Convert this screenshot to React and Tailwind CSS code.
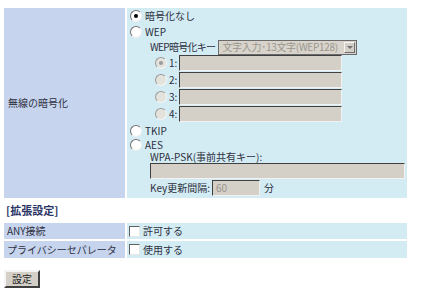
import React from 'react'

// ─── Classic form controls ───────────────────────────────────────────────────

function Radio({ checked = false, disabled = false }) {
  return (
    <span
      className={
        disabled
          ? 'inline-flex items-center justify-center w-[12px] h-[12px] rounded-full shrink-0 bg-[#e4e2dc] border border-t-[#9a9a9a] border-l-[#9a9a9a] border-r-[#f4f4f4] border-b-[#f4f4f4]'
          : 'inline-flex items-center justify-center w-[12px] h-[12px] rounded-full shrink-0 bg-white border border-t-[#707070] border-l-[#707070] border-r-[#eeeeee] border-b-[#eeeeee]'
      }
    >
      {checked && (
        <span className={disabled ? 'w-[4px] h-[4px] rounded-full bg-[#9a9a9a]' : 'w-[4px] h-[4px] rounded-full bg-black'} />
      )}
    </span>
  )
}

function Checkbox() {
  return (
    <span className="inline-block w-[11px] h-[11px] shrink-0 bg-white border border-t-[#606060] border-l-[#606060] border-r-[#e8e8e8] border-b-[#e8e8e8]" />
  )
}

function TextBox({ className = '', children }) {
  return (
    <div
      className={`h-[16px] bg-[#d4d0c8] border border-t-[#404040] border-l-[#404040] border-r-[#f2f2f2] border-b-[#f2f2f2] flex items-center pl-[3px] text-[#9a968e] ${className}`}
    >
      {children}
    </div>
  )
}

function Option({ checked, disabled, children }) {
  return (
    <div className="flex items-center gap-[3px]">
      <Radio checked={checked} disabled={disabled} />
      <span>{children}</span>
    </div>
  )
}

// ─── Page ────────────────────────────────────────────────────────────────────

export default function App() {
  const keys = ['1', '2', '3', '4']

  return (
    <div className="w-[425px] h-[292px] bg-white pl-[4px] pt-[8px] text-[10px] leading-none text-[#2e3040] font-['Noto_Sans_CJK_JP','Noto_Sans',sans-serif]">

      {/* Encryption table */}
      <div className="flex w-[403px] gap-[2px]">
        <div className="w-[121px] bg-[#c6d4ee] flex items-center pl-[4px]">無線の暗号化</div>

        <div className="flex-1 bg-[#d3ebf3] pl-[3px] pb-[2px] flex flex-col">
          <div className="h-[16px] flex items-center"><Option checked>暗号化なし</Option></div>
          <div className="h-[15px] flex items-center"><Option>WEP</Option></div>

          <div className="h-[16px] flex items-center pl-[20px] gap-[3px]">
            <span className="whitespace-nowrap tracking-[-0.7px]">WEP暗号化キー</span>
            <div className="w-[139px] h-[15px] border border-[#6a6a6a] bg-[#d8d4cc] flex items-center justify-between">
              <span className="pl-[3px] text-[#9a968e] whitespace-nowrap tracking-[-0.3px]">文字入力･13文字(WEP128)</span>
              <span className="w-[11px] h-[11px] mr-[1px] bg-[#d4d0c8] border border-t-[#f4f4f4] border-l-[#f4f4f4] border-r-[#707070] border-b-[#707070] flex items-center justify-center">
                <span className="w-0 h-0 border-l-[3px] border-r-[3px] border-t-[3px] border-l-transparent border-r-transparent border-t-[#707070]" />
              </span>
            </div>
          </div>

          {keys.map((k, i) => (
            <div key={k} className="h-[17px] flex items-start pl-[25px]">
              <div className="h-[16px] flex items-center gap-[2px] w-[24px] shrink-0 whitespace-nowrap">
                <Radio checked={i === 0} disabled />
                <span>{k}:</span>
              </div>
              <TextBox className="w-[163px]" />
            </div>
          ))}

          <div className="h-[15px] flex items-center"><Option>TKIP</Option></div>
          <div className="h-[13px] flex items-center"><Option>AES</Option></div>

          <div className="h-[12px] flex items-end pb-[1px] pl-[20px]">WPA-PSK(事前共有キー):</div>
          <div className="pl-[20px] pr-[2px]"><TextBox /></div>

          <div className="h-[16px] mt-[1px] flex items-center pl-[20px] gap-[2px]">
            <span>Key更新間隔:</span>
            <TextBox className="w-[48px]">60</TextBox>
            <span className="ml-[2px]">分</span>
          </div>
        </div>
      </div>

      {/* Extended settings */}
      <div className="h-[25px] flex items-center pl-[2px] text-[11px] font-bold text-[#2a3566]">[拡張設定]</div>

      <div className="flex flex-col gap-[2px] w-[403px]">
        <div className="flex gap-[2px] h-[16px]">
          <div className="w-[121px] bg-[#c6d4ee] flex items-center pl-[3px]">ANY接続</div>
          <div className="flex-1 bg-[#d3ebf3] flex items-center pl-[2px] gap-[3px]">
            <Checkbox />
            <span>許可する</span>
          </div>
        </div>
        <div className="flex gap-[2px] h-[17px]">
          <div className="w-[121px] bg-[#c6d4ee] flex items-center pl-[3px] whitespace-nowrap">プライバシーセパレータ</div>
          <div className="flex-1 bg-[#d3ebf3] flex items-center pl-[2px] gap-[3px]">
            <Checkbox />
            <span>使用する</span>
          </div>
        </div>
      </div>

      <button className="mt-[12px] w-[36px] h-[18px] bg-[#d4d0c8] border-2 border-t-[#f4f4f4] border-l-[#f4f4f4] border-r-[#404040] border-b-[#404040] flex items-center justify-center text-[10px] text-[#222]">
        設定
      </button>
    </div>
  )
}
